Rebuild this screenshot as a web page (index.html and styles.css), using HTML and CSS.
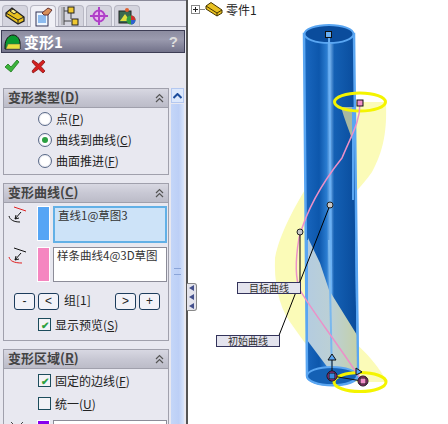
FILE: index.html
```html
<!DOCTYPE html>
<html lang="zh">
<head>
    <meta charset="UTF-8">
    <title>变形1</title>
    <link rel="stylesheet" href="styles.css">
</head>
<body>
<div class="app">
    <!-- Property manager -->
    <div class="panel">
        <div class="tabs">
            <div class="tab">
                <svg width="20" height="18" viewBox="0 0 20 18"><path d="M1 6 L7 1 L19 10 L19 14 L13 17 L1 9 Z" fill="#e8c020" stroke="#222" stroke-width="1.300"/><path d="M1 6 L13 13 L19 10 M13 13 L13 17" fill="none" stroke="#222"/><path d="M5 4 L8 2 L12 5 L9 7 Z" fill="#f8e880" stroke="#222"/></svg>
            </div>
            <div class="tab tab-active">
                <svg width="20" height="20" viewBox="0 0 20 20"><rect x="3" y="5" width="12" height="14" fill="#eef6ff" stroke="#335"/><path d="M5 9h8M5 11h8M5 13h8M5 15h8" stroke="#2a80e0"/><path d="M9 6 L15 1 L19 3 L15 8 L11 8 Z" fill="#d8905a" stroke="#633"/></svg>
            </div>
            <div class="tab">
                <svg width="20" height="20" viewBox="0 0 20 20"><path d="M3 1v18M3 5h4M3 15h7M10 7v6" stroke="#444" fill="none"/><path d="M1 1v18" stroke="#999"/><rect x="7" y="1" width="6" height="6" fill="#f0c830" stroke="#222"/><rect x="11" y="13" width="6" height="6" fill="#f0c830" stroke="#222"/></svg>
            </div>
            <div class="tab">
                <svg width="18" height="18" viewBox="0 0 18 18"><circle cx="9" cy="9" r="5.500" fill="#e8b8ee" stroke="#b040c8" stroke-width="2"/><path d="M9 0v18M0 9h18" stroke="#b040c8" stroke-width="2"/></svg>
            </div>
            <div class="tab">
                <svg width="18" height="18" viewBox="0 0 18 18"><rect x="1" y="4" width="12" height="12" fill="#3a6a50" stroke="#222"/><path d="M2 14 L7 7 L12 14 Z" fill="#e0e040"/><circle cx="9" cy="3" r="2" fill="#e06030"/><circle cx="13" cy="13" r="4.500" fill="#30a040"/><path d="M13 13V8.500A4.500 4.500 0 0 1 17.500 13Z" fill="#d03030"/><path d="M13 13H17.500A4.500 4.500 0 0 1 13 17.500Z" fill="#3060d0"/></svg>
            </div>
        </div>

        <div class="title-bar">
            <svg width="17" height="16" viewBox="0 0 17 16"><path d="M1 12 C1 5 5 1 9 1 C13 1 16 5 16 9 L16 15 L1 15 Z" fill="#0a9a30" stroke="#111"/><path d="M4 10 H16 V15 H2 Z" fill="#e8e040" stroke="#555" stroke-width=".5"/></svg>
            <span class="title-text">变形1</span>
            <span class="title-help">?</span>
        </div>

        <div class="actions">
            <svg width="16" height="15" viewBox="0 0 16 15"><path d="M1 8 L4 5 L7 8 L13 1 L15 3 L7 13 Z" fill="#3cb43c" stroke="#1e7a1e" stroke-width=".8"/></svg>
            <svg width="15" height="15" viewBox="0 0 15 15"><path d="M2 1 L7.500 5 L12 1 L14 3 L10 7.500 L14 12 L12 14 L7.500 10 L2 14 L1 12 L5 7.500 L1 3 Z" fill="#d42020" stroke="#8a1414" stroke-width=".8"/></svg>
        </div>

        <div class="pane">
            <div class="groups">
                <section class="group group-type">
                    <div class="group-head">
                        <span>变形类型(<u>D</u>)</span>
                        <svg width="9" height="10" viewBox="0 0 9 10"><path d="M1 5 L4.500 1.500 L8 5 M1 9 L4.500 5.500 L8 9" fill="none" stroke="#555" stroke-width="1.200"/></svg>
                    </div>
                    <div class="option-list">
                        <label class="option"><i class="radio"></i><span>点(<u>P</u>)</span></label>
                        <label class="option"><i class="radio radio-on"></i><span>曲线到曲线(<u>C</u>)</span></label>
                        <label class="option"><i class="radio"></i><span>曲面推进(<u>F</u>)</span></label>
                    </div>
                </section>

                <section class="group group-curves">
                    <div class="group-head">
                        <span>变形曲线(<u>C</u>)</span>
                        <svg width="9" height="10" viewBox="0 0 9 10"><path d="M1 5 L4.500 1.500 L8 5 M1 9 L4.500 5.500 L8 9" fill="none" stroke="#555" stroke-width="1.200"/></svg>
                    </div>
                    <div class="curve-row">
                        <svg class="curve-icon" width="20" height="20" viewBox="0 0 20 20"><path d="M6 1 L18 5" stroke="#e02020" fill="none"/><path d="M1 10 C2 14 6 16 12 16" stroke="#111" fill="none"/><path d="M13 6 L7 13 M7 13 l1 -4 M7 13 l4 -1" stroke="#111" fill="none"/></svg>
                        <i class="swatch swatch-blue"></i>
                        <div class="list-box list-box-active">直线1@草图3</div>
                    </div>
                    <div class="curve-row">
                        <svg class="curve-icon" width="20" height="20" viewBox="0 0 20 20"><path d="M6 1 L18 5" stroke="#111" fill="none"/><path d="M1 10 C2 14 6 16 14 16" stroke="#e02020" fill="none"/><path d="M13 6 L7 13 M7 13 l1 -4 M7 13 l4 -1" stroke="#111" fill="none"/></svg>
                        <i class="swatch swatch-pink"></i>
                        <div class="list-box">样条曲线4@3D草图</div>
                    </div>
                    <div class="stepper">
                        <button class="step">-</button>
                        <button class="step">&lt;</button>
                        <span class="step-label">组[1]</span>
                        <button class="step">&gt;</button>
                        <button class="step">+</button>
                    </div>
                    <label class="option option-check option-preview"><i class="check check-on"></i><span>显示预览(<u>S</u>)</span></label>
                </section>

                <section class="group group-area">
                    <div class="group-head">
                        <span>变形区域(<u>R</u>)</span>
                        <svg width="9" height="10" viewBox="0 0 9 10"><path d="M1 5 L4.500 1.500 L8 5 M1 9 L4.500 5.500 L8 9" fill="none" stroke="#555" stroke-width="1.200"/></svg>
                    </div>
                    <label class="option option-check"><i class="check check-on"></i><span>固定的边线(<u>F</u>)</span></label>
                    <label class="option option-check"><i class="check"></i><span>统一(<u>U</u>)</span></label>
                    <div class="curve-row">
                        <svg class="curve-icon" width="20" height="20" viewBox="0 0 20 20"><path d="M3 2 L9 8 M15 2 L9 8" stroke="#444" fill="none"/></svg>
                        <i class="swatch swatch-purple"></i>
                        <div class="list-box"></div>
                    </div>
                </section>
            </div>

            <div class="scrollbar">
                <div class="scroll-up"><svg width="9" height="6" viewBox="0 0 9 6"><path d="M0.500 5 L4.500 1 L8.500 5" fill="none" stroke="#1c4c9c" stroke-width="2"/></svg></div>
                <div class="scroll-thumb"><i class="grip"></i></div>
            </div>
        </div>
    </div>

    <div class="splitter">
        <div class="splitter-tab">
            <svg width="5" height="24" viewBox="0 0 5 24"><path d="M5 0 V6 L0 3 Z M5 9 V15 L0 12 Z M5 18 V24 L0 21 Z" fill="#44508c"/></svg>
        </div>
    </div>

    <!-- Graphics area -->
    <div class="viewport">
        <div class="tree">
            <i class="tree-plus"></i>
            <i class="tree-line"></i>
            <svg width="18" height="15" viewBox="0 0 18 15"><path d="M1 4 L6 0.500 L17 8 L17 11 L12 14 L1 7 Z" fill="#e8c020" stroke="#443300"/><path d="M1 4 L12 11 L17 8 M12 11 L12 14" fill="none" stroke="#443300"/></svg>
            <span>零件1</span>
        </div>

        <svg class="model" width="258" height="424" viewBox="190 0 258 424">
            <defs>
                <linearGradient id="tube" x1="0" x2="1" y1="0" y2="0">
                    <stop offset="0" stop-color="#1a68c0"/>
                    <stop offset=".28" stop-color="#0d57ac"/>
                    <stop offset=".42" stop-color="#2a7cd0"/>
                    <stop offset=".48" stop-color="#74aee8"/>
                    <stop offset=".56" stop-color="#1460b4"/>
                    <stop offset="1" stop-color="#084a9a"/>
                </linearGradient>
                <linearGradient id="band" x1="0" x2="1" y1="0" y2="0">
                    <stop offset="0" stop-color="#b4cce0"/>
                    <stop offset=".5" stop-color="#bcd0d4"/>
                    <stop offset="1" stop-color="#c4d0a8"/>
                </linearGradient>
            </defs>

            <!-- swept surface behind the tube -->
            <path d="M334 102 L386 102 C387 130 384 150 372 172 C362 186 354 192 352 200 L352 340 C366 352 380 368 387 382 L334 382 C322 365 306 345 290 322 C278 305 274 280 275 258 C280 232 296 205 306 188 C316 150 340 130 334 102 Z" fill="#fbfbb8"/>

            <!-- tube -->
            <path d="M304 34 L307 376 A25 9 0 0 0 358 376 L354 34 Z" fill="url(#tube)" stroke="#5aa6f2" stroke-width="2.500"/>
            <ellipse cx="329" cy="34" rx="24.500" ry="9" fill="#0a4c9c" stroke="#5aa6f2" stroke-width="2"/>
            <path d="M329 34 L332 376" stroke="#6ab0f4" stroke-width="2"/>

            <!-- swept surface in front of the tube -->
            <path d="M308 238 L320 263 L329 290 L357 335 L358 374 L328 368 L307 340 Z" fill="url(#band)"/>
            <path d="M341 107 L353 107 L353 142 C349 130 344 118 341 107 Z" fill="#a8b8a0"/>
            <path d="M329 240 L332 376" stroke="#7ab8ee" stroke-width="2"/>
            <path d="M356 240 L358 376" stroke="#5aa6f2" stroke-width="2"/>
            <path d="M307 240 L307 376" stroke="#5aa6f2" stroke-width="2"/>
            <ellipse cx="332" cy="376" rx="25" ry="9" fill="#1460b4" stroke="#5aa6f2" stroke-width="2"/>
            <path d="M353 107 L353 200" stroke="#5aa6f2" stroke-width="2"/>

            <!-- deformation curves -->
            <ellipse cx="360" cy="102" rx="25.500" ry="9" fill="none" stroke="#f4f400" stroke-width="3"/>
            <ellipse cx="360" cy="382" rx="26" ry="9.500" fill="none" stroke="#f4f400" stroke-width="3"/>
            <path d="M360 103 C360 122 352 134 342 158 C326 178 308 205 299 238 C295 262 295 278 300 290 C310 308 335 340 360 378" fill="none" stroke="#ec90c8" stroke-width="1.500"/>

            <!-- leaders -->
            <path d="M330 205 L278 338 M300 232 L300 284" stroke="#000" fill="none"/>
            <circle cx="330" cy="205" r="3" fill="#c8c8c8" stroke="#222"/>
            <circle cx="300" cy="232" r="3" fill="#c8c8c8" stroke="#222"/>

            <!-- handles -->
            <rect x="325.500" y="31.500" width="6" height="6" fill="#6ab0f4" stroke="#111"/>
            <rect x="357" y="100" width="6" height="6" fill="#f090c8" stroke="#111"/>
            <path d="M332 375 V360 M332 376 L362 381" stroke="#111" fill="none"/>
            <path d="M328 360 L332 354 L336 360 Z" fill="#5aa6f2" stroke="#111"/>
            <path d="M356 368 L362 372 L356 375 Z" fill="#5aa6f2" stroke="#111"/>
            <circle cx="332" cy="376" r="5" fill="#d040c0" stroke="#111"/>
            <rect x="329" y="373" width="6" height="6" fill="#3a8ae0" stroke="#111"/>
            <circle cx="363" cy="381" r="5" fill="#d040a0" stroke="#111"/>
            <rect x="360" y="378" width="6" height="6" fill="#f090c8" stroke="#111"/>
        </svg>

        <div class="tag tag-target">目标曲线</div>
        <div class="tag tag-start">初始曲线</div>
    </div>
</div>
</body>
</html>
```

FILE: styles.css
```css
html, body {
    margin: 0;
    padding: 0;
    overflow: hidden;
}

body {
    font-family: "Noto Sans CJK SC", "Liberation Sans", sans-serif;
    font-size: 12px;
    color: #222;
    background: #fff;
}

.app {
    display: flex;
    width: 448px;
    height: 424px;
    overflow: hidden;
}

/* Property manager */
.panel {
    width: 186px;
    flex: none;
    background: #e8e8f0;
    overflow: hidden;
}

.tabs {
    display: flex;
    gap: 2px;
    height: 27px;
    padding: 4px 0 0 2px;
    box-sizing: border-box;
    border-top: 1px solid #8a8a9a;
    border-bottom: 1px solid #9a9aa8;
}

.tab {
    width: 26px;
    height: 21px;
    display: flex;
    align-items: center;
    justify-content: center;
    background: #d4d4de;
    border: 1px solid #b8b8c4;
    border-bottom: none;
    border-radius: 4px 4px 0 0;
    box-sizing: border-box;
}

.tab-active {
    background: #f0f0f6;
    height: 22px;
}

.title-bar {
    display: flex;
    align-items: center;
    gap: 3px;
    height: 21px;
    margin: 3px 1px 0;
    padding: 0 6px 0 2px;
    border: 1px solid #3c3c54;
    background: linear-gradient(#8c8ca0, #9a9aae 40%, #72728a);
    color: #fff;
}

.title-text {
    flex: 1;
    font-size: 15px;
    font-weight: bold;
}

.title-help {
    font-family: "Liberation Sans", sans-serif;
    font-size: 15px;
    font-weight: bold;
    color: #ddd;
}

.actions {
    display: flex;
    gap: 11px;
    height: 35px;
    padding: 6px 0 0 4px;
    box-sizing: border-box;
}

.pane {
    display: flex;
    gap: 2px;
    padding-left: 3px;
}

.groups {
    width: 166px;
    flex: none;
    display: flex;
    flex-direction: column;
    gap: 8px;
}

.group {
    border: 1px solid #a0a0ac;
    box-sizing: border-box;
}

.group-type { height: 87px; }
.group-curves { height: 158px; }
.group-area { height: 90px; }

.group-head {
    display: flex;
    justify-content: space-between;
    align-items: center;
    height: 18px;
    padding: 0 4px;
    border-bottom: 1px solid #a0a0ac;
    background: linear-gradient(#d8d8e2, #c8c8d4 50%, #bcbcc8);
    color: #444;
    font-size: 13px;
    font-weight: bold;
}

.group-head span {
    margin-top: -3px;
}

.option {
    display: flex;
    align-items: center;
    gap: 4px;
    height: 21px;
    padding-left: 34px;
}

.radio {
    width: 12px;
    height: 12px;
    flex: none;
    border: 1px solid #5a6a88;
    border-radius: 50%;
    background: radial-gradient(#fff 50%, #ccd);
    display: flex;
    align-items: center;
    justify-content: center;
}

.radio-on::after {
    content: "";
    width: 6px;
    height: 6px;
    border-radius: 50%;
    background: #2ca040;
}

.check {
    width: 11px;
    height: 11px;
    flex: none;
    border: 1px solid #1c4c5c;
    background: #f2f2f6;
    display: flex;
    align-items: center;
    justify-content: center;
    font-style: normal;
    font-size: 10px;
    line-height: 11px;
    font-weight: bold;
    color: #2ca040;
}

.check-on::after {
    content: "✔";
}

.option-check {
    height: 23px;
}

.option-preview {
    margin-top: 2px;
}

.curve-row {
    display: flex;
    align-items: flex-start;
    height: 41px;
    padding: 3px 0 0 4px;
    box-sizing: border-box;
}

.group-area .curve-row {
    padding-top: 5px;
}

.curve-icon {
    flex: none;
    margin-right: 10px;
}

.swatch {
    width: 11px;
    height: 33px;
    flex: none;
    margin-right: 3px;
    margin-left: -1px;
    border: 1px solid #fff;
}

.swatch-blue { background: #55a5f5; }
.swatch-pink { background: #f586c0; }
.swatch-purple { background: #8800ee; }

.list-box {
    width: 106px;
    height: 33px;
    padding: 0 3px;
    border: 1px solid #8c8c98;
    background: #fff;
    font-size: 11.500px;
    line-height: 15px;
    white-space: nowrap;
    overflow: hidden;
    color: #333;
}

.list-box-active {
    width: 104px;
    border: 2px solid #62b0e6;
    background: #cde3f8;
}

.stepper {
    display: flex;
    align-items: center;
    gap: 3px;
    height: 20px;
    padding: 6px 0 0 10px;
}

.step {
    width: 21px;
    height: 17px;
    padding: 0;
    flex: none;
    border: 1px solid #1c3c5c;
    border-radius: 3px;
    background: #f2f2f8;
    color: #222;
    font: 12px "Liberation Sans", sans-serif;
}

.step-label {
    width: 48px;
    padding-left: 2px;
    margin-top: -4px;
}

.scrollbar {
    width: 13px;
    height: 350px;
    flex: none;
    display: flex;
    flex-direction: column;
    gap: 1px;
}

.scroll-up {
    height: 15px;
    display: flex;
    align-items: center;
    justify-content: center;
    background: #dce8fc;
    border: 1px solid #b4c8f0;
    box-sizing: border-box;
}

.scroll-thumb {
    flex: 1;
    display: flex;
    align-items: center;
    justify-content: center;
    background: linear-gradient(90deg, #c4d6f8, #bccff6 60%, #d8e4fa);
}

.grip {
    width: 7px;
    height: 5px;
    border-top: 1px solid #8aa4d8;
    border-bottom: 1px solid #8aa4d8;
}

/* Splitter */
.splitter {
    position: relative;
    z-index: 2;
    width: 4px;
    flex: none;
    box-sizing: border-box;
    background: #fff;
    border-left: 2px solid #555;
}

.splitter-tab {
    position: absolute;
    left: -1px;
    top: 283px;
    width: 10px;
    height: 28px;
    box-sizing: border-box;
    display: flex;
    align-items: center;
    justify-content: center;
    border: 1px solid #888;
    border-left: none;
    border-radius: 0 3px 3px 0;
    background: #e4e4ec;
}

/* Graphics area */
.viewport {
    position: relative;
    flex: 1;
    background: #fff;
}

.tree {
    display: flex;
    align-items: center;
    height: 15px;
    padding: 2px 0 0 1px;
    font-size: 12px;
}

.tree-plus {
    width: 7px;
    height: 7px;
    flex: none;
    border: 1px solid #888;
    background:
        linear-gradient(#222, #222) center / 5px 1px no-repeat,
        linear-gradient(#222, #222) center / 1px 5px no-repeat,
        #fff;
}

.tree-line {
    width: 5px;
    height: 1px;
    background: #888;
}

.tree span {
    margin-left: 3px;
}

.model {
    position: absolute;
    left: 0;
    top: 0;
}

.tag {
    position: absolute;
    width: 62px;
    height: 10px;
    border: 1px solid #33335a;
    background: #e4e4ee;
    color: #333;
    font-size: 10px;
    line-height: 10px;
    text-align: center;
}

.tag-target {
    left: 47px;
    top: 282px;
}

.tag-start {
    left: 26px;
    top: 335px;
}
```
